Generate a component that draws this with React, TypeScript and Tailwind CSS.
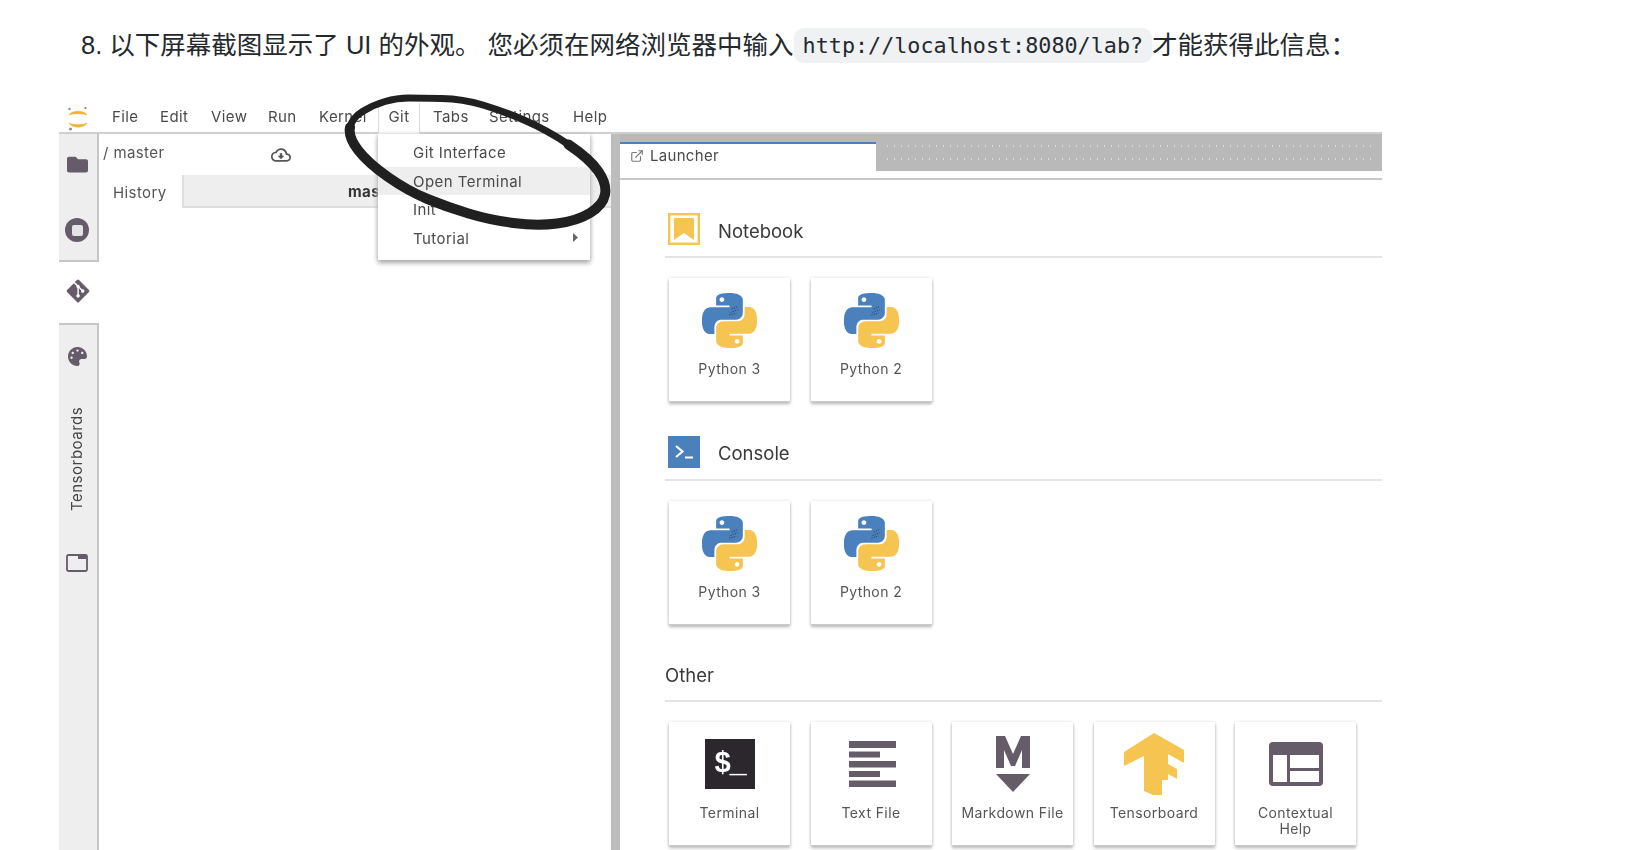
import type { ReactNode } from "react";
import { FaFolder, FaGitAlt, FaPalette } from "react-icons/fa";
import { MdOutlineCloudDownload } from "react-icons/md";
import { ExternalLink } from "lucide-react";

const PY_BLUE =
  "M14.25.18l.9.2.73.26.59.3.45.32.34.34.25.34.16.33.1.3.04.26.02.2-.01.13V8.5l-.05.63-.13.55-.21.46-.26.38-.3.31-.33.25-.35.19-.35.14-.33.1-.3.07-.26.04-.21.02H8.77l-.69.05-.59.14-.5.22-.41.27-.33.32-.27.35-.2.36-.15.37-.1.35-.07.32-.04.27-.02.21v3.06H3.17l-.21-.03-.28-.07-.32-.12-.35-.18-.36-.26-.36-.36-.35-.46-.32-.59-.28-.73-.21-.88-.14-1.05-.05-1.23.06-1.22.16-1.04.24-.87.32-.71.36-.57.4-.44.42-.33.42-.24.4-.16.36-.1.32-.05.24-.01h.16l.06.01h8.16v-.83H6.18l-.01-2.75-.02-.37.05-.34.11-.31.17-.28.25-.26.31-.23.38-.2.44-.18.51-.15.58-.12.64-.1.71-.06.77-.04.84-.02 1.27.05zm-6.3 1.98l-.23.33-.08.41.08.41.23.34.33.22.41.09.41-.09.33-.22.23-.34.08-.41-.08-.41-.23-.33-.33-.22-.41-.09-.41.09z";
const PY_YELLOW =
  "M21.04 6.11l.28.06.32.12.35.18.36.27.36.35.35.47.32.59.28.73.21.88.14 1.04.05 1.23-.06 1.23-.16 1.04-.24.86-.32.71-.36.57-.4.45-.42.33-.42.24-.4.16-.36.09-.32.05-.24.02-.16-.01h-8.22v.82h5.84l.01 2.76.02.36-.05.34-.11.31-.17.29-.25.25-.31.24-.38.2-.44.17-.51.15-.58.13-.64.09-.71.07-.77.04-.84.01-1.27-.04-1.07-.14-.9-.2-.73-.25-.59-.3-.45-.33-.34-.34-.25-.34-.16-.33-.1-.3-.04-.25-.02-.2.01-.13v-5.34l.05-.64.13-.54.21-.46.26-.38.3-.32.33-.24.35-.2.35-.14.33-.1.3-.06.26-.04.21-.02.13-.01h5.84l.69-.05.59-.14.5-.21.41-.28.33-.32.27-.35.2-.36.15-.36.1-.35.07-.32.04-.28.02-.21V6.07h2.09l.14.01zm-6.47 14.25l-.23.33-.08.41.08.41.23.33.33.23.41.08.41-.08.33-.23.23-.33.08-.41-.08-.41-.23-.33-.33-.23-.41-.08-.41.08z";

type Pt = [number, number];
const RING: Pt[] = [
  [420, 98], [463, 99], [503, 111], [547, 130], [590, 159], [607, 184], [603, 205], [577, 221],
  [537, 226], [490, 220], [447, 207], [408, 191], [368, 163], [348, 137], [352, 118], [373, 105], [397, 98],
];
const mid = (a: Pt, b: Pt) => `${(a[0] + b[0]) / 2} ${(a[1] + b[1]) / 2}`;

function ringPath() {
  const n = RING.length;
  let d = `M${mid(RING[n - 1], RING[0])}`;
  for (let i = 0; i < n; i++) {
    d += `Q${RING[i][0]} ${RING[i][1]} ${mid(RING[i], RING[(i + 1) % n])}`;
  }
  return d + "Z";
}

function lowerPath() {
  let d = `M${mid(RING[3], RING[4])}`;
  for (let i = 4; i <= 13; i++) {
    d += `Q${RING[i][0]} ${RING[i][1]} ${mid(RING[i], RING[i + 1])}`;
  }
  return d;
}

function Python() {
  return (
    <svg width="55" height="55" viewBox="0 0 24 24">
      <path d={PY_BLUE} fill="#4a80bb" />
      <path d={PY_YELLOW} fill="#f5c451" />
      <path d="M12.5 8.5l3-1.2M13 7l2.6-1.2M12 9.6l3-.8" stroke="#26384d" strokeWidth="0.45" strokeDasharray="0.4 0.6" fill="none" />
    </svg>
  );
}

function Logo() {
  return (
    <svg width="22" height="26" viewBox="0 0 22 26">
      <path d="M2 10C5 5 17 5 20 10C17 8.2 5 8.2 2 10Z" fill="#efb02f" stroke="#efb02f" strokeWidth="0.6" />
      <path d="M2 18C5 23.5 17 23.5 20 18C17 20.2 5 20.2 2 18Z" fill="#efb02f" stroke="#efb02f" strokeWidth="0.6" />
      <circle cx="18.5" cy="3" r="1.1" fill="#7d7d7d" />
      <circle cx="2.5" cy="4" r="1.2" fill="#8d8d8d" />
      <circle cx="3.5" cy="24" r="1.5" fill="#8d8d8d" />
    </svg>
  );
}

function Card({ label, icon }: { label: ReactNode; icon: ReactNode }) {
  return (
    <div className="w-[121px] h-[123px] shrink-0 bg-white flex flex-col items-center shadow-[0_1px_1px_#ccc,0_3px_3px_#b5b5b5,0_0_3px_#ddd]">
      <div className="h-[82px] w-full flex items-center justify-center pt-[2px] shrink-0">{icon}</div>
      <div className="text-[14px] leading-[16px] text-[#555] text-center pt-[1px] tracking-[0.4px] whitespace-nowrap">{label}</div>
    </div>
  );
}

function SectionHeader({ title, icon, tight }: { title: string; icon?: ReactNode; tight?: boolean }) {
  return (
    <div className="h-[45px] ml-[45px] border-b-2 border-[#e4e4e4] flex items-start">
      {icon ? <div className="w-[32px] h-[32px] ml-[3px] mr-[18px]">{icon}</div> : null}
      <div className={`text-[18.5px] leading-[32px] text-[#3a3a3a] ${tight ? "pt-[1px]" : "pt-[2px]"}`}>{title}</div>
    </div>
  );
}

function NotebookIcon() {
  return (
    <svg width="32" height="32" viewBox="0 0 32 32">
      <rect x="1.2" y="1.2" width="29.6" height="29.6" fill="#fff" stroke="#f5c451" strokeWidth="2.4" />
      <path d="M6 5h20v22l-10-7-10 7z" fill="#f5c451" />
    </svg>
  );
}

function ConsoleIcon() {
  return (
    <svg width="32" height="32" viewBox="0 0 32 32">
      <rect width="32" height="32" fill="#4a80bb" />
      <path d="M8 10l6.5 5.5L8 21" fill="none" stroke="#fff" strokeWidth="2.2" />
      <rect x="17" y="20.5" width="8" height="2" fill="#fff" />
    </svg>
  );
}

function TerminalIcon() {
  return (
    <div className="w-[50px] h-[50px] bg-[#2b272d] flex items-center justify-center font-['Liberation_Mono',monospace] font-bold text-white text-[29px] leading-none tracking-[-2px]">
      $_
    </div>
  );
}

function TextFileIcon() {
  return (
    <svg width="50" height="50" viewBox="0 0 50 50" fill="#665b68" className="ml-[3px]">
      <rect x="1" y="2" width="47" height="7" />
      <rect x="1" y="12.5" width="31" height="6" />
      <rect x="1" y="22" width="47" height="6.5" />
      <rect x="1" y="32" width="31" height="6" />
      <rect x="1" y="41.5" width="47" height="6.5" />
    </svg>
  );
}

function MarkdownIcon() {
  return (
    <svg width="36" height="56" viewBox="0 0 36 56" fill="#665b68">
      <path d="M1 0h9l8 18 8-18h9v32h-8V14l-7 16h-4L9 14v18H1z" />
      <path d="M1 38h34L18 56z" />
    </svg>
  );
}

function TensorIcon() {
  return (
    <svg width="60" height="62" viewBox="0 0 60 62" fill="#f5c451">
      <path d="M30 0L60 17v13L44 21v10l9 5v10l-9-5v6H38v15h-9L20 58V23L0 33V19z" />
    </svg>
  );
}

function HelpIcon() {
  return (
    <svg width="54" height="44" viewBox="0 0 54 44">
      <rect width="54" height="44" rx="4" fill="#665b68" />
      <rect x="4" y="13" width="14" height="27" fill="#fff" />
      <rect x="21" y="13" width="29" height="13" fill="#fff" />
      <rect x="21" y="29" width="29" height="11" fill="#fff" />
    </svg>
  );
}

function WindowIcon() {
  return (
    <svg width="22" height="18" viewBox="0 0 22 18" fill="none">
      <rect x="1" y="1" width="20" height="16" rx="1.5" stroke="#665b68" strokeWidth="1.8" />
      <path d="M12 1h9v4h-9z" fill="#665b68" />
    </svg>
  );
}

const menus = [
  { t: "File", w: "w-[48px]" },
  { t: "Edit", w: "w-[51px]" },
  { t: "View", w: "w-[57px]" },
  { t: "Run", w: "w-[51px]" },
  { t: "Kernel", w: "w-[59px]" },
];

export default function App() {
  return (
    <div className="w-[1640px] h-[850px] overflow-hidden bg-white font-['Inter','Noto_Sans_CJK_SC',sans-serif]">
      <p className="h-[103px] pl-[81px] pt-[25px] text-[25.5px] leading-[40px] text-[#24292e] font-['Liberation_Sans','Noto_Sans_CJK_SC',sans-serif] whitespace-nowrap">
        8. 以下屏幕截图显示了 UI 的外观。 您必须在网络浏览器中输入
        <code className="font-['DejaVu_Sans_Mono',monospace] text-[21.76px] align-[1px] bg-[#eff1f3] rounded-[9.6px] px-[9px] py-[5px]">http://localhost:8080/lab?</code>
        才能获得此信息：
      </p>

      <div className="relative ml-[59px] w-[1323px] h-[747px] blur-[0.6px]">
        {/* menu bar */}
        <div className="h-[31px] border-b-2 border-[#cfcfcf] flex items-stretch text-[15px] tracking-[0.4px] text-[#4a4a4a]">
          <div className="w-[53px] pl-[8px] pt-[1px] flex items-center">
            <Logo />
          </div>
          {menus.map((m) => (
            <div key={m.t} className={`${m.w} pt-[4px] leading-[20px]`}>
              {m.t}
            </div>
          ))}
          <div className="w-[42px] h-[31px] bg-white border-x border-[#ddd] text-center pt-[4px] leading-[20px]">Git</div>
          <div className="w-[13px]" />
          <div className="w-[56px] pt-[4px] leading-[20px]">Tabs</div>
          <div className="w-[84px] pt-[4px] leading-[20px]">Settings</div>
          <div className="pt-[4px] leading-[20px]">Help</div>
        </div>

        {/* body */}
        <div className="flex h-[716px]">
          {/* sidebar */}
          <div className="w-[40px] shrink-0 flex flex-col">
            <div className="h-[128px] bg-[#eeeeee] border-r-2 border-b-2 border-[#c6c6c6] flex flex-col items-center pr-[2px]">
              <FaFolder className="mt-[20px] text-[#665b68]" size={21} />
              <div className="mt-[43px] w-[24px] h-[24px] rounded-full bg-[#665b68] flex items-center justify-center">
                <div className="w-[11px] h-[11px] rounded-[2px] bg-[#e4e4e4]" />
              </div>
            </div>
            <div className="h-[61px] bg-white flex items-center justify-center pr-[2px] pb-[3px]">
              <FaGitAlt className="text-[#665b68]" size={26} />
            </div>
            <div className="flex-1 bg-[#eeeeee] border-r-2 border-t-2 border-[#c6c6c6] flex flex-col items-center pr-[2px]">
              <FaPalette className="mt-[22px] text-[#665b68]" size={19} />
              <div className="mt-[42px] h-[102px] flex items-center justify-center text-[15px] tracking-[0.5px] text-[#444] [writing-mode:vertical-rl] rotate-180 whitespace-nowrap">
                Tensorboards
              </div>
              <div className="mt-[44px]">
                <WindowIcon />
              </div>
            </div>
          </div>

          {/* file panel */}
          <div className="w-[512px] shrink-0 text-[15px] tracking-[0.4px] text-[#555]">
            <div className="h-[41px] flex items-start pl-[4px] pt-[9px] leading-[20px]">
              <span className="w-[168px]">/ master</span>
              <MdOutlineCloudDownload className="mt-[2px]" size={20} />
            </div>
            <div className="h-[33px] flex bg-[#eeeeee] border-b-2 border-[#dedede]">
              <div className="w-[85px] h-[33px] bg-white border-r-2 border-[#dedede] pl-[14px] pt-[8px] leading-[20px]">History</div>
              <div className="pl-[164px] pt-[7px] leading-[20px] font-bold text-[#333]">master</div>
            </div>
          </div>

          {/* splitter */}
          <div className="w-[9px] shrink-0 bg-[#bdbdbd]" />

          {/* launcher */}
          <div className="flex-1 min-w-0">
            <div className="h-[46px] border-b-2 border-[#c8c8c8]">
              <div className="flex h-[37px] bg-[#b9b9b9]">
                <div className="w-[256px] h-[36px] shrink-0 mt-[8px] bg-white border-t-2 border-[#4a80bb] flex items-center pb-[10px] pl-[10px] text-[15px] tracking-[0.3px] text-[#4a4a4a]">
                  <ExternalLink size={14} className="text-[#777] mr-[6px]" />
                  Launcher
                </div>
                <div className="flex-1 flex flex-col justify-center gap-[11px] pl-[8px] pr-[6px]">
                  <div className="h-[2px] bg-[radial-gradient(circle,#dcdcdc_1px,transparent_1px)] bg-[length:7px_2px]" />
                  <div className="h-[2px] bg-[radial-gradient(circle,#dcdcdc_1px,transparent_1px)] bg-[length:7px_2px]" />
                </div>
              </div>
            </div>

            <div className="pt-[33px]">
              <SectionHeader title="Notebook" icon={<NotebookIcon />} />
              <div className="flex gap-[20.5px] pl-[49px] pt-[20px] pb-[35px]">
                <Card label="Python 3" icon={<Python />} />
                <Card label="Python 2" icon={<Python />} />
              </div>
              <SectionHeader title="Console" icon={<ConsoleIcon />} tight />
              <div className="flex gap-[20.5px] pl-[49px] pt-[20px] pb-[33px]">
                <Card label="Python 3" icon={<Python />} />
                <Card label="Python 2" icon={<Python />} />
              </div>
              <SectionHeader title="Other" />
              <div className="flex gap-[20.5px] pl-[49px] pt-[20px]">
                <Card label="Terminal" icon={<TerminalIcon />} />
                <Card label="Text File" icon={<TextFileIcon />} />
                <Card label="Markdown File" icon={<MarkdownIcon />} />
                <Card label="Tensorboard" icon={<TensorIcon />} />
                <Card label={<>Contextual<br />Help</>} icon={<HelpIcon />} />
              </div>
            </div>
          </div>
        </div>

        {/* git dropdown */}
        <div className="absolute left-[319px] top-[31px] w-[212px] h-[126px] bg-white pt-[5px] text-[15px] tracking-[0.45px] text-[#4a4a4a] shadow-[0_3px_5px_#aaa,0_0_4px_#ccc]">
          <div className="h-[28px] pl-[35px] leading-[28px]">Git Interface</div>
          <div className="h-[28px] pl-[35px] leading-[30px] bg-[#eeeeee]">Open Terminal</div>
          <div className="h-[28px] pl-[35px] leading-[30px]">Init</div>
          <div className="h-[28px] pl-[35px] leading-[32px] flex justify-between pr-[12px]">
            Tutorial
            <svg width="5" height="9" viewBox="0 0 5 9" className="mt-[10px]">
              <path d="M0 0l5 4.5L0 9z" fill="#666" />
            </svg>
          </div>
        </div>

        {/* hand-drawn ellipse */}
        <svg className="absolute left-0 top-[-13px] pointer-events-none" width="640" height="150" viewBox="59 90 640 150" fill="none">
          <path d={ringPath()} stroke="#202020" strokeWidth="7" strokeLinejoin="round" />
          <path d={lowerPath()} stroke="#202020" strokeWidth="10" strokeLinecap="round" />
        </svg>
      </div>
    </div>
  );
}
